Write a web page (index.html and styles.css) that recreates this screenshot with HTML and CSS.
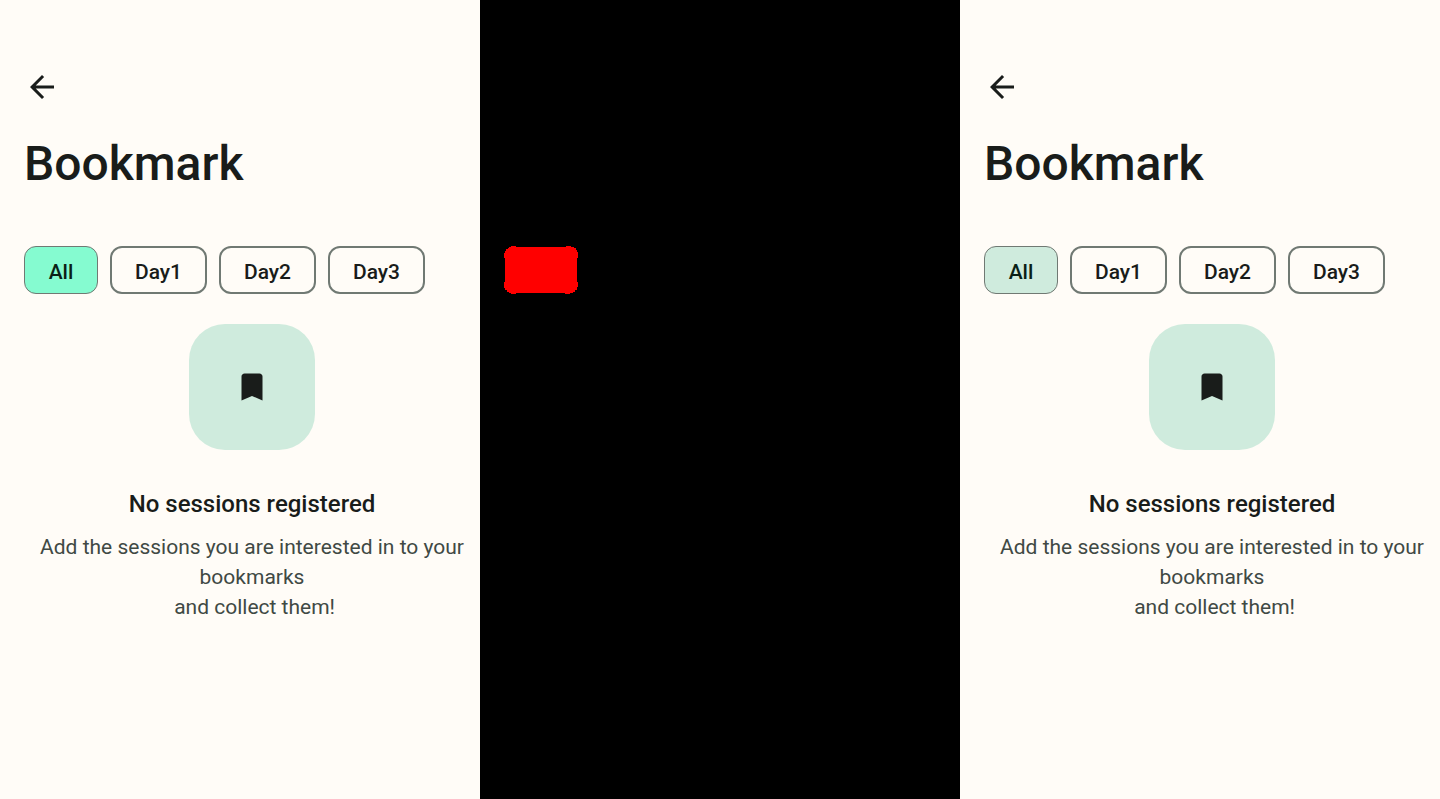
FILE: index.html
```html
<!DOCTYPE html>
<html lang="en">
<head>
<meta charset="utf-8">
<meta name="viewport" content="width=device-width, initial-scale=1">
<title>Bookmark</title>
<link rel="stylesheet" href="styles.css">
</head>
<body>
<main class="comparison">
  <section class="screen">
    <button class="back" type="button" aria-label="Back">
      <svg class="icon" viewBox="0 0 24 24" aria-hidden="true"><path d="M20 11H7.83l5.59-5.59L12 4l-8 8 8 8 1.41-1.41L7.83 13H20v-2z"/></svg>
    </button>
    <h1 class="title">Bookmark</h1>
    <div class="chips">
      <button class="chip chip-selected chip-bright" type="button" aria-pressed="true">All</button>
      <button class="chip" type="button" aria-pressed="false">Day1</button>
      <button class="chip" type="button" aria-pressed="false">Day2</button>
      <button class="chip" type="button" aria-pressed="false">Day3</button>
    </div>
    <div class="empty">
      <div class="badge">
        <svg class="icon" viewBox="0 0 24 24" aria-hidden="true"><path d="M17 3H7c-1.1 0-2 .9-2 2v16l7-3 7 3V5c0-1.1-.9-2-2-2z"/></svg>
      </div>
      <h2 class="empty-title">No sessions registered</h2>
      <p class="empty-text">Add the sessions you are interested in to your bookmarks<br>&nbsp;and collect them!</p>
    </div>
  </section>
  <section class="difference" aria-label="Difference">
    <svg class="changed" viewBox="0 0 74 48" aria-hidden="true" shape-rendering="crispEdges"><path d="M7 0h5v1h50V0h5v1h3v1h2v2h1v2h1v6h-1v24h1v5h-1v3h-2v2h-2v1h-3v1h-5v-1H12v1H7v-1H5v-1H3v-2H1v-2H0v-6h1V12H0V7h1V5h1V3h2V2h1V1h2z"/></svg>
  </section>
  <section class="screen">
    <button class="back" type="button" aria-label="Back">
      <svg class="icon" viewBox="0 0 24 24" aria-hidden="true"><path d="M20 11H7.83l5.59-5.59L12 4l-8 8 8 8 1.41-1.41L7.83 13H20v-2z"/></svg>
    </button>
    <h1 class="title">Bookmark</h1>
    <div class="chips">
      <button class="chip chip-selected" type="button" aria-pressed="true">All</button>
      <button class="chip" type="button" aria-pressed="false">Day1</button>
      <button class="chip" type="button" aria-pressed="false">Day2</button>
      <button class="chip" type="button" aria-pressed="false">Day3</button>
    </div>
    <div class="empty">
      <div class="badge">
        <svg class="icon" viewBox="0 0 24 24" aria-hidden="true"><path d="M17 3H7c-1.1 0-2 .9-2 2v16l7-3 7 3V5c0-1.1-.9-2-2-2z"/></svg>
      </div>
      <h2 class="empty-title">No sessions registered</h2>
      <p class="empty-text">Add the sessions you are interested in to your bookmarks<br>&nbsp;and collect them!</p>
    </div>
  </section>
</main>
</body>
</html>
```

FILE: styles.css
```css
* {
  box-sizing: border-box;
}

body {
  margin: 0;
  background: #fffcf7;
  color: #191c1a;
  font-family: Roboto, sans-serif;
}

h1, h2, p {
  margin: 0;
}

.comparison {
  display: grid;
  grid-template-columns: repeat(3, minmax(0, 1fr));
  min-height: 100vh;
}

.screen {
  padding: 69px 0 24px 24px;
  background: #fffcf7;
}

.difference {
  padding: 246px 24px 24px;
  background: #000;
}

.changed {
  display: block;
  width: 74px;
  fill: #f00;
}

.icon {
  display: block;
  width: 36px;
  height: 36px;
  fill: #191c1a;
}

.back {
  display: block;
  padding: 0;
  border: 0;
  background: none;
}

.title {
  margin-top: 27px;
  font-size: 48px;
  font-weight: 500;
  line-height: 64px;
}

.chips {
  display: flex;
  gap: 12px;
  margin-top: 50px;
}

.chip {
  min-width: 97px;
  height: 48px;
  padding: 4px 20px 0;
  border: 2px solid #707973;
  border-radius: 12px;
  background: none;
  color: #191c1a;
  font: 500 21px/30px Roboto, sans-serif;
}

.chip-selected {
  min-width: 74px;
  border-width: 1px;
  background: #cfebdd;
  color: #0a1f16;
}

.chip-bright {
  background: #85fbd0;
}

.empty {
  display: flex;
  flex-direction: column;
  align-items: center;
  margin-top: 30px;
  text-align: center;
}

.badge {
  display: grid;
  place-items: center;
  width: 126px;
  height: 126px;
  border-radius: 36px;
  background: #cfebdd;
}

.empty-title {
  margin-top: 36px;
  font-size: 24px;
  font-weight: 500;
  line-height: 36px;
}

.empty-text {
  margin-top: 10px;
  color: #404944;
  font-size: 21px;
  line-height: 30px;
}
```
